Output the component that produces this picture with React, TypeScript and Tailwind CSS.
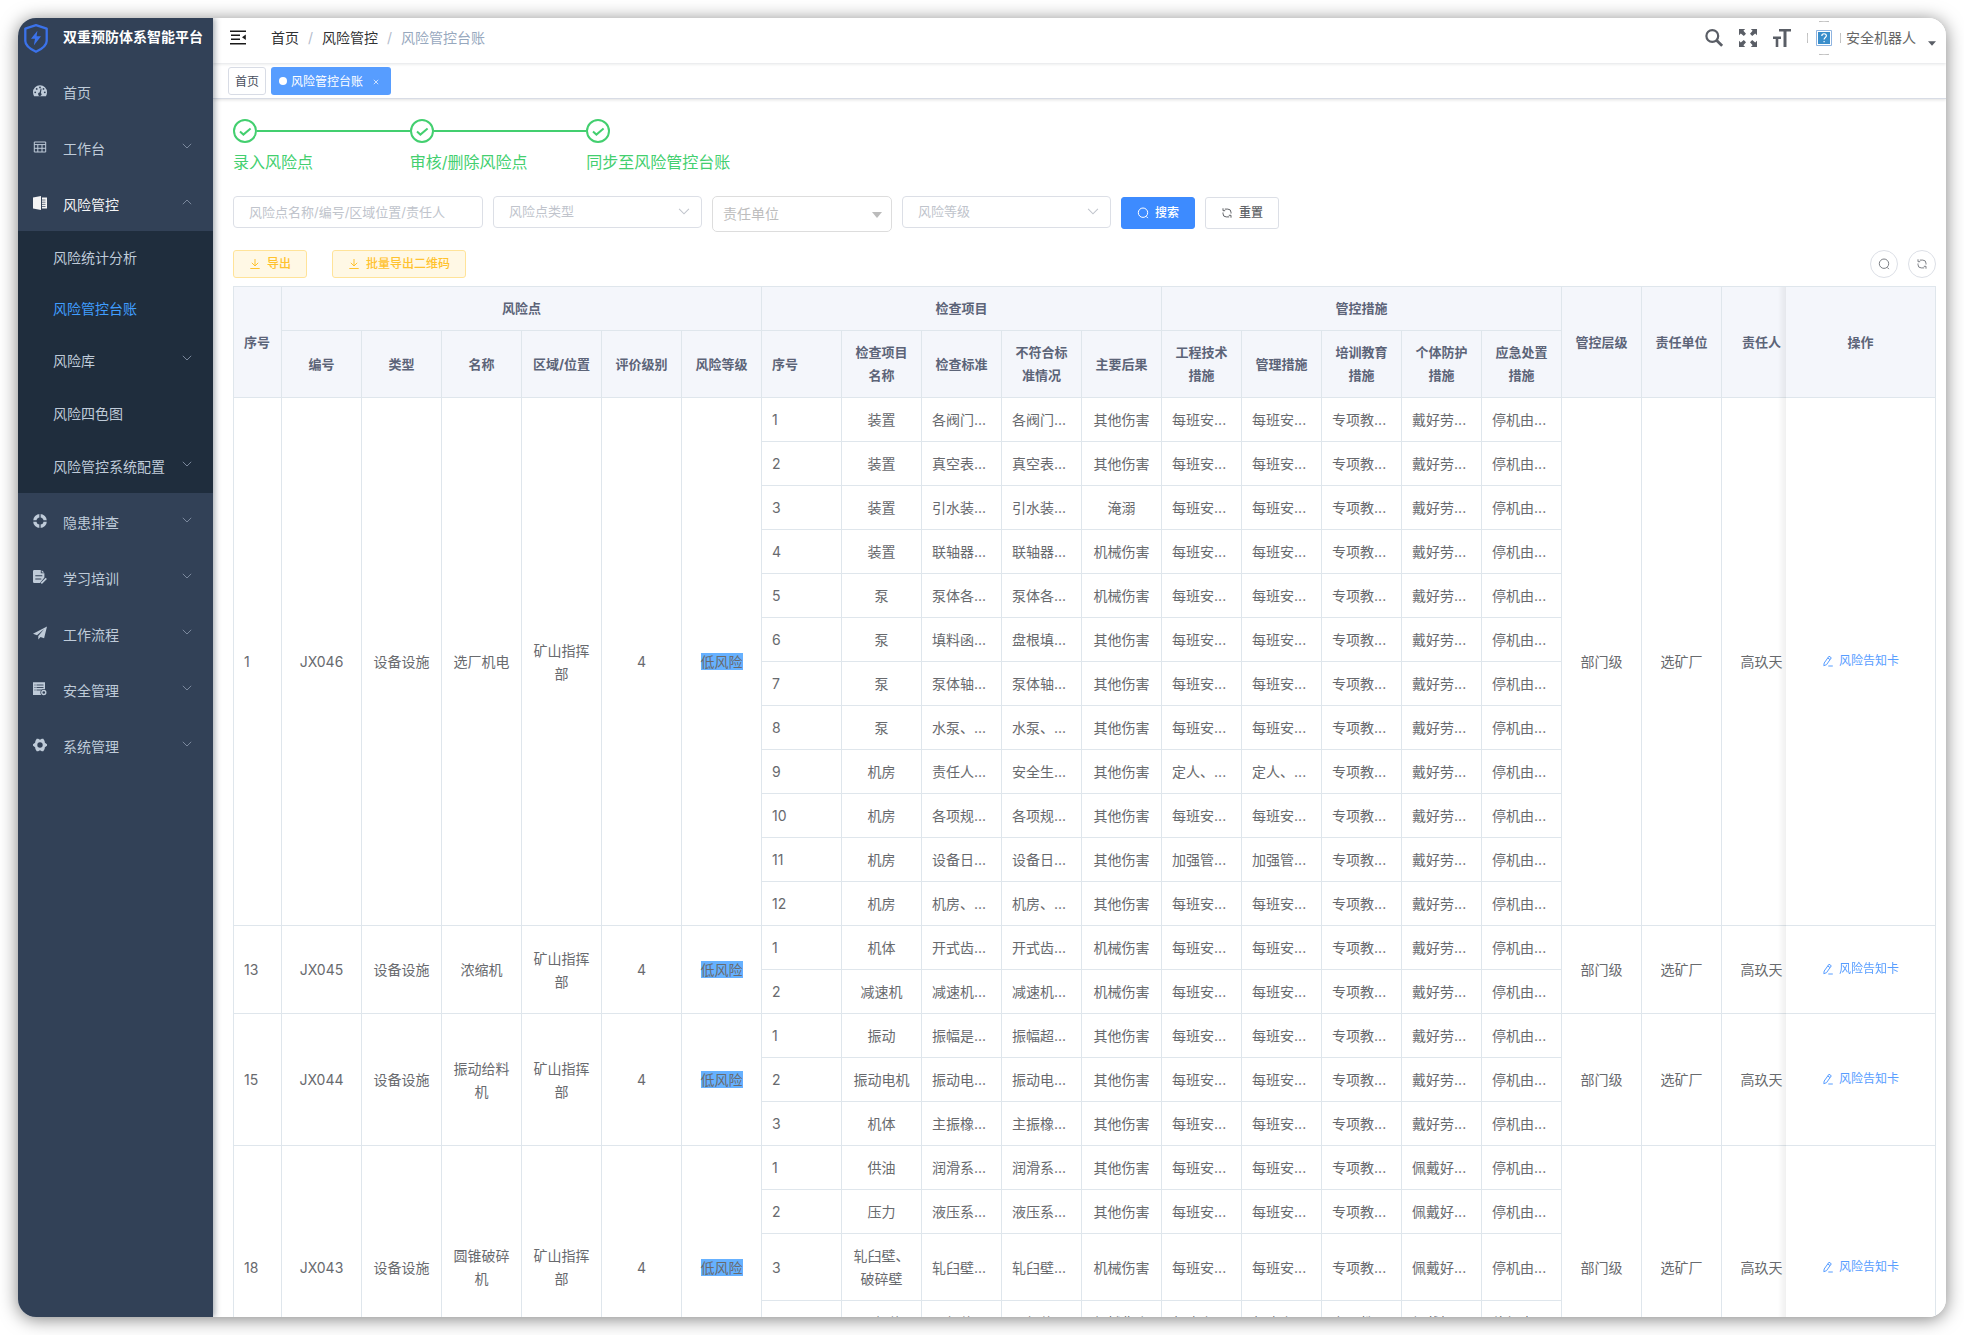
import React from "react";

type IconProps = { className?: string };

const SIDEBAR_BG = "#324157";

function ShieldLogo() {
  return (
    <svg viewBox="0 0 24 29" className="h-[29px] w-6 shrink-0" fill="none" aria-hidden="true">
      <path d="M12 1.2 22.7 4.6V17c0 4.600-5.400 8.300-10.700 10.800C6.700 25.300 1.300 21.600 1.300 17V4.600Z" stroke="#3b72ea" strokeWidth="2.300" strokeLinejoin="round" />
      <path d="M13.400 6.800 7 14.800h4l-1.200 6.600 7.200-9.100h-4.400Z" fill="#3b72ea" />
    </svg>
  );
}

function DashboardIcon() {
  return (
    <svg viewBox="0 0 14 14" className="size-3.5" aria-hidden="true">
      <path d="M7 1.300a7 7 0 0 0-7 7c0 1.500.4 2.800 1.100 4h11.800a7.500 7.500 0 0 0 1.100-4 7 7 0 0 0-7-7Z" fill="currentColor" />
      <g fill={SIDEBAR_BG}>
        <circle cx="7" cy="3.400" r="0.900" />
        <circle cx="3.700" cy="4.900" r="0.900" />
        <circle cx="2.200" cy="8.300" r="0.900" />
        <circle cx="10.500" cy="4.900" r="0.900" />
        <circle cx="11.800" cy="8.300" r="0.900" />
        <path d="m8.600 4.800-.7 4.100a1.700 1.700 0 1 1-1.300-.3l1.100-4Z" />
      </g>
    </svg>
  );
}

function TableIcon() {
  return (
    <svg viewBox="0 0 14 14" className="size-3.5" fill="none" stroke="currentColor" aria-hidden="true">
      <path d="M1.300 2h11.400v10H1.300ZM1.300 4.600h11.400M1.300 8.300h11.400M4.800 4.600V12M9 4.600V12" strokeWidth="1" />
    </svg>
  );
}

function BookIcon() {
  return (
    <svg viewBox="0 0 14 14" className="size-3.5" aria-hidden="true">
      <path d="M0 1.600 8 0v14l-8-1.600Z" fill="currentColor" />
      <path d="M9 1.500h5v11H9Z" fill="currentColor" />
      <path d="M9 4h3.500M9 6.200h3.500M9 8.400h3.500M9 10.500h3.500" stroke={SIDEBAR_BG} strokeWidth="0.700" />
    </svg>
  );
}

function LifebuoyIcon() {
  return (
    <svg viewBox="0 0 14 14" className="size-3.5" fill="none" aria-hidden="true">
      <circle cx="7" cy="7" r="5.200" stroke="currentColor" strokeWidth="3.400" />
      <path d="M7 0v4M7 10v4M0 7h4M10 7h4" stroke={SIDEBAR_BG} strokeWidth="1.300" />
    </svg>
  );
}

function FormEditIcon() {
  return (
    <svg viewBox="0 0 14 14" className="size-3.5" aria-hidden="true">
      <path d="M1.200 0h6.600v3.200h3.600v4.300L7 13H1.200A1.200 1.200 0 0 1 0 11.800V1.200A1.200 1.200 0 0 1 1.200 0ZM8.700.2l2.600 2.200H8.700Z" fill="currentColor" />
      <path d="M2.300 5.800h7M2.300 9h6" stroke={SIDEBAR_BG} strokeWidth="1.100" />
      <path d="m8.300 13.300 5-5" stroke="currentColor" strokeWidth="1.700" />
    </svg>
  );
}

function PlaneIcon() {
  return (
    <svg viewBox="0 0 14 14" className="size-3.5" fill="currentColor" aria-hidden="true">
      <path d="M14 .4 0 7.700l4 1.500 7.200-6.100L5.300 9.900v3.700l2.200-2.700 3.600 1.300Z" />
    </svg>
  );
}

function ServerGearIcon() {
  return (
    <svg viewBox="0 0 14 14" className="size-3.5" aria-hidden="true">
      <path d="M0 .3h12v8L8 13H0Z" fill="currentColor" />
      <path d="M1.500 3h1M3.500 3h7M1.500 5.500h1M3.500 5.500h7M1.500 8h1M3.500 8h5" stroke={SIDEBAR_BG} strokeWidth="0.900" />
      <circle cx="10.800" cy="10.500" r="3.400" fill={SIDEBAR_BG} />
      <circle cx="10.800" cy="10.500" r="2" fill="none" stroke="currentColor" strokeWidth="1.300" />
    </svg>
  );
}

function GearIcon() {
  return (
    <svg viewBox="0 0 14 14" className="size-3.5" aria-hidden="true">
      <path d="M3.700.8h1.500l1.800.9 1.800-.9h1.500l1.300 2.100.3 1.800L14 6.200v1.600l-2.100 1.500-.3 1.800-1.300 2.100H8.800L7 12.300l-1.800.9H3.700l-1.300-2.100-.3-1.800L0 7.800V6.200l2.100-1.500.3-1.800Z" fill="currentColor" />
      <circle cx="7" cy="7" r="2.700" fill={SIDEBAR_BG} />
    </svg>
  );
}

function Chevron({ className }: IconProps) {
  return (
    <svg viewBox="0 0 10 6" className={className} fill="none" stroke="currentColor" aria-hidden="true">
      <path d="m.8.800 4.200 4.200L9.200.800" strokeWidth="0.900" />
    </svg>
  );
}

function SearchThin({ className }: IconProps) {
  return (
    <svg viewBox="0 0 12 12" className={className} fill="none" stroke="currentColor" aria-hidden="true">
      <circle cx="6" cy="5.700" r="4.700" />
      <path d="m9.100 9.300 1.800 1.800" />
    </svg>
  );
}

function RefreshThin({ className }: IconProps) {
  return (
    <svg viewBox="0 0 12 12" className={className} fill="none" stroke="currentColor" aria-hidden="true">
      <path d="M3.800 2.100h3a3.200 3.200 0 0 1 3.200 3.200v1.200M8.200 9.900h-3A3.200 3.200 0 0 1 2 6.700V5.500" />
      <path d="M2 1.300v2.400h2.200M10 10.700V8.300H7.800" />
    </svg>
  );
}

function DownloadThin({ className }: IconProps) {
  return (
    <svg viewBox="0 0 12 12" className={className} fill="none" stroke="currentColor" aria-hidden="true">
      <path d="M6 1v6.800M2.800 4.800 6 8l3.200-3.200M1.300 10.500h9.400" />
    </svg>
  );
}

function EditThin({ className }: IconProps) {
  return (
    <svg viewBox="0 0 12 12" className={className} fill="none" stroke="currentColor" aria-hidden="true">
      <path d="m7 1.200 2.300 1.600-4.800 6.900-2.700 1 .4-2.700ZM5.800 3l2.300 1.600M6.300 11h4.500" />
    </svg>
  );
}

type SubItem = { label: string; height: string; active?: boolean; nested?: boolean };
type MenuItem = { label: string; icon: React.ReactNode; arrow?: boolean; open?: boolean; children?: SubItem[] };

const MENU: MenuItem[] = [
  { label: "首页", icon: <DashboardIcon /> },
  { label: "工作台", icon: <TableIcon />, arrow: true },
  {
    label: "风险管控",
    icon: <BookIcon />,
    arrow: true,
    open: true,
    children: [
      { label: "风险统计分析", height: "h-[52px]" },
      { label: "风险管控台账", height: "h-[50px]", active: true },
      { label: "风险库", height: "h-[54px]", nested: true },
      { label: "风险四色图", height: "h-[52px]" },
      { label: "风险管控系统配置", height: "h-[54px]", nested: true },
    ],
  },
  { label: "隐患排查", icon: <LifebuoyIcon />, arrow: true },
  { label: "学习培训", icon: <FormEditIcon />, arrow: true },
  { label: "工作流程", icon: <PlaneIcon />, arrow: true },
  { label: "安全管理", icon: <ServerGearIcon />, arrow: true },
  { label: "系统管理", icon: <GearIcon />, arrow: true },
];

function Sidebar() {
  return (
    <aside className="relative z-20 w-[195px] shrink-0 bg-[#324157] text-sm text-[#bfcbd9] shadow-[2px_0_6px_rgba(0,21,41,0.35)]">
      <div className="flex h-[45px] items-center gap-[15px] pl-1.5 pb-2">
        <div className="pt-1"><ShieldLogo /></div>
        <h1 className="whitespace-nowrap font-bold text-white">双重预防体系智能平台</h1>
      </div>
      <nav>
        <ul>
          {MENU.map((item) => (
            <li key={item.label}>
              <a href="#" className={`flex h-14 items-center gap-4 pl-[15px] pr-[21px] ${item.open ? "text-[#f4f4f5]" : ""}`}>
                {item.icon}
                <span className="flex-1 pt-1">{item.label}</span>
                {item.arrow && <Chevron className={`mb-0.5 h-1.5 w-2.5 text-[#8391a5] ${item.open ? "rotate-180" : ""}`} />}
              </a>
              {item.children && (
                <ul className="bg-[#1f2d3d]">
                  {item.children.map((sub) => (
                    <li key={sub.label}>
                      <a href="#" className={`flex items-center justify-between pl-[35px] pr-[21px] ${sub.height} ${sub.active ? "text-[#409eff]" : ""}`}>
                        <span className="whitespace-nowrap pt-0.5">{sub.label}</span>
                        {sub.nested && <Chevron className="mb-1 h-1.5 w-2.5 text-[#8391a5]" />}
                      </a>
                    </li>
                  ))}
                </ul>
              )}
            </li>
          ))}
        </ul>
      </nav>
    </aside>
  );
}

function Header() {
  return (
    <header className="relative flex h-[45px] items-center bg-white pr-2.5 text-sm shadow-[0_1px_3px_rgba(0,21,41,0.12)]">
      <button type="button" aria-label="折叠菜单" className="ml-[17px] mb-1.5">
        <svg viewBox="0 0 16 15" className="h-[15px] w-4" fill="none" stroke="#1a1a1a" strokeWidth="1.500" aria-hidden="true">
          <path d="M0 1.200h16M1 5.300h9M1 9.300h9M0 13.700h16" />
          <path d="M15.800 4.500v5.600L12 7.300Z" fill="#1a1a1a" stroke="none" />
        </svg>
      </button>
      <nav aria-label="面包屑" className="ml-[25px] flex items-center pb-1.5">
        <a href="#" className="text-[#303133]">首页</a>
        <span className="mx-[9px] text-[#b4bccc]">/</span>
        <a href="#" className="text-[#303133]">风险管控</a>
        <span className="mx-[9px] text-[#b4bccc]">/</span>
        <span className="text-[#97a8be]">风险管控台账</span>
      </nav>
      <div className="ml-auto flex items-center pb-1.5 text-[#5a5e66]">
        <button type="button" aria-label="搜索">
          <svg viewBox="0 0 18 18" className="size-[18px]" fill="none" stroke="currentColor" aria-hidden="true">
            <circle cx="7.300" cy="7" r="5.900" strokeWidth="2.200" />
            <path d="m11.500 11.300 5.600 5.500" strokeWidth="2.800" />
          </svg>
        </button>
        <button type="button" aria-label="全屏" className="ml-4">
          <svg viewBox="0 0 18 18" className="size-[18px]" fill="currentColor" aria-hidden="true">
            {[0, 90, 180, 270].map((angle) => (
              <path key={angle} transform={`rotate(${angle} 9 9)`} d="M0 0h6.200L4.400 1.800 7 4.800 4.800 7 1.800 4.400 0 6.200Z" />
            ))}
          </svg>
        </button>
        <button type="button" aria-label="布局大小" className="ml-4">
          <svg viewBox="0 0 18 18" className="size-[18px]" fill="currentColor" aria-hidden="true">
            <path d="M6 0h12v2.600h-4.500V18h-3V2.600H6ZM0 7.500h8V10H5.300v8H2.700v-8H0Z" />
          </svg>
        </button>
        <button type="button" className="ml-4 flex items-center">
          <svg viewBox="0 0 34 34" className="size-[34px]" fill="none" aria-hidden="true">
            <path d="M12 .6Q17-.2 22 .6M12 33.400q5 .8 10 0M.5 12q-.5 5 0 10M33.500 12q.5 5 0 10" stroke="#b5b5b5" strokeWidth="0.900" />
            <path d="M9.500 9.500h15v15h-15Z" fill="#fff" stroke="#8fb4e0" />
            <path d="M11 11h12v12H11Z" fill="#3a8ecb" />
            <path d="M14.800 15c0-3 4.600-2.900 4.600-.2 0 1.700-2.300 1.800-2.300 3.800M17.100 20v1.200" stroke="#fff" strokeWidth="1.200" />
          </svg>
          <span className="ml-[5px] text-[#666]">安全机器人</span>
          <svg viewBox="0 0 8 5" className="ml-3 mt-3 h-[5px] w-2" aria-hidden="true">
            <path d="M0 .3h8L4 4.700Z" fill="#5a5e66" />
          </svg>
        </button>
      </div>
    </header>
  );
}

function TagsView() {
  return (
    <div className="flex h-9 items-start gap-[5px] border-b border-[#d8dce5] bg-white pl-[15px] pt-1 text-xs shadow-[0_1px_3px_rgba(0,0,0,0.12)]">
      <a href="#" className="flex h-7 items-center rounded-[3px] border border-[#d8dce5] px-1.5 pt-0.5 text-[#495060]">首页</a>
      <div className="flex h-7 items-center rounded-[3px] bg-[#579dff] px-2 text-white">
        <span className="mr-1 size-2 rounded-full bg-white" />
        <a href="#" className="pt-0.5">风险管控台账</a>
        <button type="button" aria-label="关闭" className="ml-2.5 mt-0.5 mr-1">
          <svg viewBox="0 0 6 6" className="size-1.5" stroke="#fff" strokeWidth="0.700" aria-hidden="true">
            <path d="m.8.800 4.400 4.400M5.200.800.8 5.200" />
          </svg>
        </button>
      </div>
    </div>
  );
}

const STEPS = ["录入风险点", "审核/删除风险点", "同步至风险管控台账"];

function Steps() {
  return (
    <ol className="flex w-[530px] text-[#43cf6f]">
      {STEPS.map((label, i) => (
        <li key={label} className="flex-1">
          <div className="flex items-center">
            <svg viewBox="0 0 24 24" className="size-6 shrink-0" fill="none" stroke="currentColor" aria-hidden="true">
              <circle cx="12" cy="12" r="11" strokeWidth="2" />
              <path d="m7 12.600 3.400 3 7.200-6" strokeWidth="2" />
            </svg>
            {i < STEPS.length - 1 && <span className="h-0.5 flex-1 bg-[#43cf6f]" />}
          </div>
          <p className="whitespace-nowrap text-base leading-[38px]">{label}</p>
        </li>
      ))}
    </ol>
  );
}

function PlainSelect({ label }: { label: string }) {
  return (
    <div className="relative w-[209px]">
      <select aria-label={label} className="h-8 w-full appearance-none rounded border border-[#dcdfe6] bg-white pl-[15px] text-[13px] text-[#c0c4cc]">
        <option>{label}</option>
      </select>
      <Chevron className="pointer-events-none absolute right-3 top-3 h-[7px] w-3 text-[#c0c4cc]" />
    </div>
  );
}

function SearchForm() {
  return (
    <form className="flex items-start gap-2.5">
      <input aria-label="风险点名称/编号/区域位置/责任人" placeholder="风险点名称/编号/区域位置/责任人" className="h-8 w-[250px] rounded border border-[#dcdfe6] px-[15px] text-[13px] placeholder:text-[#c0c4cc]" />
      <PlainSelect label="风险点类型" />
      <div className="relative w-[180px]">
        <select aria-label="责任单位" className="h-9 w-full appearance-none rounded-[5px] border border-[#ddd] bg-white pl-2.5 text-sm text-[#bdbdbd]">
          <option>责任单位</option>
        </select>
        <svg viewBox="0 0 10 6" className="pointer-events-none absolute right-2.5 top-4 h-1.5 w-2.5" aria-hidden="true">
          <path d="M0 0h10L5 6Z" fill="#bbb" />
        </svg>
      </div>
      <PlainSelect label="风险等级" />
      <button type="button" className="mt-px flex h-8 items-center gap-1.5 rounded-[3px] border border-[#3d8bff] bg-[#3d8bff] px-[15px] text-xs font-medium text-white">
        <SearchThin className="size-3" />
        搜索
      </button>
      <button type="button" className="mt-px flex h-8 items-center gap-1.5 rounded-[3px] border border-[#dcdfe6] bg-white px-[15px] text-xs font-medium text-[#606266]">
        <RefreshThin className="size-3" />
        重置
      </button>
    </form>
  );
}

function Toolbar() {
  return (
    <div className="flex items-center">
      {["导出", "批量导出二维码"].map((label) => (
        <button key={label} type="button" className="mr-[25px] flex h-7 items-center gap-1.5 rounded-[3px] border border-[#ffe399] bg-[#fff8e5] px-[15px] text-xs font-medium text-[#ffc22e]">
          <DownloadThin className="size-3" />
          {label}
        </button>
      ))}
      <div className="ml-auto flex gap-2.5 text-[#7c7f85]">
        <button type="button" aria-label="隐藏搜索" className="grid size-7 place-items-center rounded-full border border-[#dcdfe6]">
          <SearchThin className="size-3" />
        </button>
        <button type="button" aria-label="刷新" className="grid size-7 place-items-center rounded-full border border-[#dcdfe6]">
          <RefreshThin className="size-3" />
        </button>
      </div>
    </div>
  );
}

/* Check item: name, standard, deviation, consequence, technical measure, management measure. */
type Check = [string, string, string, string, string?, string?];
type RiskPoint = { no: number; code: string; name: string; ppe: string; checks: Check[] };

const OTHER = "其他伤害";
const MECH = "机械伤害";

const RISKS: RiskPoint[] = [
  {
    no: 1,
    code: "JX046",
    name: "选厂机电",
    ppe: "戴好劳",
    checks: [
      ["装置", "各阀门", "各阀门", OTHER],
      ["装置", "真空表", "真空表", OTHER],
      ["装置", "引水装", "引水装", "淹溺"],
      ["装置", "联轴器", "联轴器", MECH],
      ["泵", "泵体各", "泵体各", MECH],
      ["泵", "填料函", "盘根填", OTHER],
      ["泵", "泵体轴", "泵体轴", OTHER],
      ["泵", "水泵、", "水泵、", OTHER],
      ["机房", "责任人", "安全生", OTHER, "定人、", "定人、"],
      ["机房", "各项规", "各项规", OTHER],
      ["机房", "设备日", "设备日", OTHER, "加强管", "加强管"],
      ["机房", "机房、", "机房、", OTHER],
    ],
  },
  {
    no: 13,
    code: "JX045",
    name: "浓缩机",
    ppe: "戴好劳",
    checks: [
      ["机体", "开式齿", "开式齿", MECH],
      ["减速机", "减速机", "减速机", MECH],
    ],
  },
  {
    no: 15,
    code: "JX044",
    name: "振动给料机",
    ppe: "戴好劳",
    checks: [
      ["振动", "振幅是", "振幅超", OTHER],
      ["振动电机", "振动电", "振动电", OTHER],
      ["机体", "主振橡", "主振橡", OTHER],
    ],
  },
  {
    no: 18,
    code: "JX043",
    name: "圆锥破碎机",
    ppe: "佩戴好",
    checks: [
      ["供油", "润滑系", "润滑系", OTHER],
      ["压力", "液压系", "液压系", OTHER],
      ["轧臼壁、破碎壁", "轧臼壁", "轧臼壁", MECH],
      ["下机体", "下机体", "下机体", MECH],
      ["机体", "机体各", "机体各", MECH],
    ],
  },
];

const TD = "border-r border-b border-[#dfe6ec] px-2.5 py-2.5 text-center";
const TD_LEFT = "border-r border-b border-[#dfe6ec] px-2.5 py-2.5 text-left";
const TD_CUT = "border-r border-b border-[#dfe6ec] pl-2.5 py-2.5 text-left whitespace-nowrap";
const TH = "border-r border-b border-[#dfe6ec] bg-[#f4f6fb] px-2 py-2.5 font-bold";
const TH_LEFT = "border-r border-b border-[#dfe6ec] bg-[#f4f6fb] px-2.5 py-2.5 font-bold text-left";
const PINNED =
  "sticky right-0 z-10 border-r border-b border-[#dfe6ec] px-2.5 before:absolute before:top-0 before:-bottom-px before:right-full before:w-2 before:bg-linear-to-l before:from-black/6 before:to-transparent";

const SUB_HEADERS = ["编号", "类型", "名称", "区域/位置", "评价级别", "风险等级", "序号", "检查项目名称", "检查标准", "不符合标准情况", "主要后果", "工程技术措施", "管理措施", "培训教育措施", "个体防护措施", "应急处置措施"];

function RiskTable() {
  return (
    <div className="overflow-hidden border-l border-t border-[#dfe6ec]">
      <table className="w-full min-w-[1718px] table-fixed border-separate border-spacing-0 text-sm leading-[23px] text-[#686a6e]">
        <colgroup>
          <col className="w-12" />
          {Array.from({ length: 19 }, (_, i) => (
            <col key={i} className="w-20" />
          ))}
          <col className="w-[150px]" />
        </colgroup>
        <thead className="text-[13px] text-[#5c6478]">
          <tr className="h-11">
            <th rowSpan={2} className={TH_LEFT}>序号</th>
            <th colSpan={6} className={TH}>风险点</th>
            <th colSpan={5} className={TH}>检查项目</th>
            <th colSpan={5} className={TH}>管控措施</th>
            <th rowSpan={2} className={TH}>管控层级</th>
            <th rowSpan={2} className={TH}>责任单位</th>
            <th rowSpan={2} className={TH}>责任人</th>
            <th rowSpan={2} className={`${PINNED} bg-[#f4f6fb] font-bold`}>操作</th>
          </tr>
          <tr>
            {SUB_HEADERS.map((label) => (
              <th key={label} className={label === "序号" ? TH_LEFT : TH}>{label}</th>
            ))}
          </tr>
        </thead>
        <tbody>
          {RISKS.map((risk) =>
            risk.checks.map(([name, standard, deviation, consequence, tech = "每班安", manage = "每班安"], i) => {
              const span = risk.checks.length;
              const first = i === 0;
              return (
                <tr key={`${risk.no}-${i}`} className="h-11">
                  {first && (
                    <>
                      <td rowSpan={span} className={TD_LEFT}>{risk.no}</td>
                      <td rowSpan={span} className={TD}>{risk.code}</td>
                      <td rowSpan={span} className={TD}>设备设施</td>
                      <td rowSpan={span} className={TD}>{risk.name}</td>
                      <td rowSpan={span} className={TD}>矿山指挥部</td>
                      <td rowSpan={span} className={TD}>4</td>
                      <td rowSpan={span} className={TD}>
                        <span className="inline-block bg-[#66b1ff] leading-[17px]">低风险</span>
                      </td>
                    </>
                  )}
                  <td className={TD_LEFT}>{i + 1}</td>
                  <td className={TD}>{name}</td>
                  <td className={TD_CUT}>{standard}...</td>
                  <td className={TD_CUT}>{deviation}...</td>
                  <td className={TD}>{consequence}</td>
                  <td className={TD_CUT}>{tech}...</td>
                  <td className={TD_CUT}>{manage}...</td>
                  <td className={TD_CUT}>专项教...</td>
                  <td className={TD_CUT}>{risk.ppe}...</td>
                  <td className={TD_CUT}>停机由...</td>
                  {first && (
                    <>
                      <td rowSpan={span} className={TD}>部门级</td>
                      <td rowSpan={span} className={TD}>选矿厂</td>
                      <td rowSpan={span} className={TD}>高玖天</td>
                      <td rowSpan={span} className={`${PINNED} bg-white text-center`}>
                        <button type="button" className="inline-flex items-center gap-[5px] text-xs text-[#579dff]">
                          <EditThin className="size-3" />
                          风险告知卡
                        </button>
                      </td>
                    </>
                  )}
                </tr>
              );
            }),
          )}
        </tbody>
      </table>
    </div>
  );
}

export default function App() {
  return (
    <div className="h-screen overflow-hidden bg-white p-[18px] font-['Inter','Noto_Sans_CJK_SC',sans-serif]">
      <div className="h-full rounded-[18px] shadow-[0_2px_18px_rgba(0,0,0,0.5)]">
        <div className="flex h-full overflow-hidden rounded-[18px] bg-white">
          <Sidebar />
          <div className="min-w-0 flex-1">
            <Header />
            <TagsView />
            <main className="px-5 pt-5 pr-2.5">
              <Steps />
              <div className="pt-[15px]">
                <SearchForm />
              </div>
              <div className="pt-[18px] pb-2">
                <Toolbar />
              </div>
              <RiskTable />
            </main>
          </div>
        </div>
      </div>
    </div>
  );
}
